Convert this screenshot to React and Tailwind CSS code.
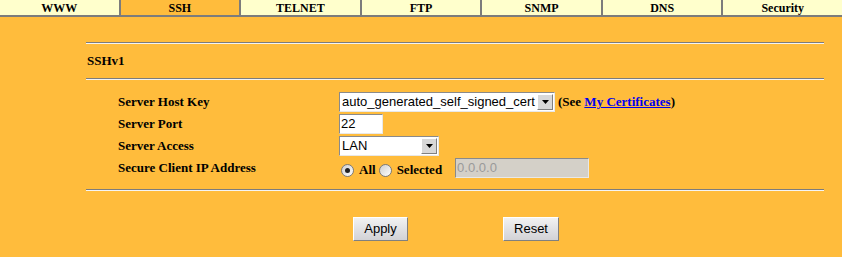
import React from 'react';

const tabs = ['WWW', 'SSH', 'TELNET', 'FTP', 'SNMP', 'DNS', 'Security'];

function Rule() {
  return <div className="h-0 border-t border-b border-t-[#7c7c7c] border-b-[#f4f4f4] w-[738px]" />;
}

function Select({ value, width }) {
  return (
    <div className={`shrink-0 flex items-center h-[20px] bg-white border border-t-[#8a8a8a] border-l-[#8a8a8a] border-r-[#e8e8e8] border-b-[#e8e8e8] ${width}`}>
      <span className="flex-1 pl-[2px] text-[13px] leading-[18px] text-black font-['Liberation_Sans',Arial,sans-serif] whitespace-nowrap overflow-hidden">
        {value}
      </span>
      <span className="w-[16px] h-[16px] mr-[1px] flex items-center justify-center bg-[#d8d8d8] border border-t-white border-l-white border-r-[#808080] border-b-[#808080]">
        <svg width="7" height="4" viewBox="0 0 7 4"><path d="M0 0h7L3.5 4z" fill="#000" /></svg>
      </span>
    </div>
  );
}

function Radio({ checked }) {
  return (
    <span className="w-[13px] h-[13px] rounded-full border border-[#7a7a7a] bg-gradient-to-br from-[#cfcfcf] to-white flex items-center justify-center">
      {checked && <span className="w-[5px] h-[5px] rounded-full bg-[#222]" />}
    </span>
  );
}

export default function App() {
  const label = "w-[253px] shrink-0 pl-[32px] text-[13px] font-bold text-black";
  const field = "border border-t-[#8a8a8a] border-l-[#8a8a8a] border-r-[#e8e8e8] border-b-[#e8e8e8] pl-[1px] text-[13px] leading-[18px] font-['Liberation_Sans',Arial,sans-serif]";
  const btn = "h-[24px] bg-gradient-to-b from-[#f2f2f2] to-[#d2d2d6] border border-t-white border-l-white border-r-[#808080] border-b-[#808080] text-[13px] font-['Liberation_Sans',Arial,sans-serif] text-black";
  return (
    <div className="w-[842px] h-[257px] bg-[#FFBC3C] font-['Liberation_Serif','Times_New_Roman',serif] overflow-hidden">
      <div className="flex h-[15px] bg-[#FFFFCC]">
        {tabs.map((t, i) => (
          <div
            key={t}
            className={`flex-1 flex items-center justify-center text-[12px] font-bold text-black leading-none ${i < tabs.length - 1 ? 'border-r-2 border-r-[#7c7c7c]' : ''} ${t === 'SSH' ? 'bg-[#FFBC3C]' : ''}`}
          >
            {t}
          </div>
        ))}
      </div>
      <div className="h-[2px] bg-[#7c7c7c]" />

      <div className="pl-[86px] pt-[25px]">
        <Rule />
        <div className="h-[34px] flex items-center pl-[1px] text-[13px] font-bold text-black">SSHv1</div>
        <Rule />

        <div className="pt-[11px]">
          <div className="flex items-center h-[22px]">
            <div className={label}>Server Host Key</div>
            <Select value="auto_generated_self_signed_cert" width="w-[216px]" />
            <span className="ml-[3px] text-[13px] font-bold text-black whitespace-nowrap">
              (See <a className="text-[#0000ee] underline">My Certificates</a>)
            </span>
          </div>
          <div className="flex items-center h-[22px]">
            <div className={label}>Server Port</div>
            <div className={`w-[44px] h-[20px] bg-white ${field}`}>22</div>
          </div>
          <div className="flex items-center h-[22px]">
            <div className={label}>Server Access</div>
            <Select value="LAN" width="w-[100px]" />
          </div>
          <div className="flex items-center h-[22px]">
            <div className={label}>Secure Client IP Address</div>
            <div className="flex items-center pt-[4px] ml-[2px]">
              <Radio checked />
              <span className="ml-[5px] text-[13px] font-bold">All</span>
              <span className="ml-[3px]"><Radio /></span>
              <span className="ml-[5px] text-[13px] font-bold">Selected</span>
            </div>
            <div className={`ml-[13px] w-[134px] h-[20px] bg-[#d4d0c8] text-[#9a9a9a] ${field}`}>0.0.0.0</div>
          </div>
        </div>

        <div className="pt-[10px]">
          <Rule />
        </div>

        <div className="flex pt-[26px]">
          <button className={`ml-[267px] w-[55px] ${btn}`}>Apply</button>
          <button className={`ml-[95px] w-[56px] ${btn}`}>Reset</button>
        </div>
      </div>
    </div>
  );
}
